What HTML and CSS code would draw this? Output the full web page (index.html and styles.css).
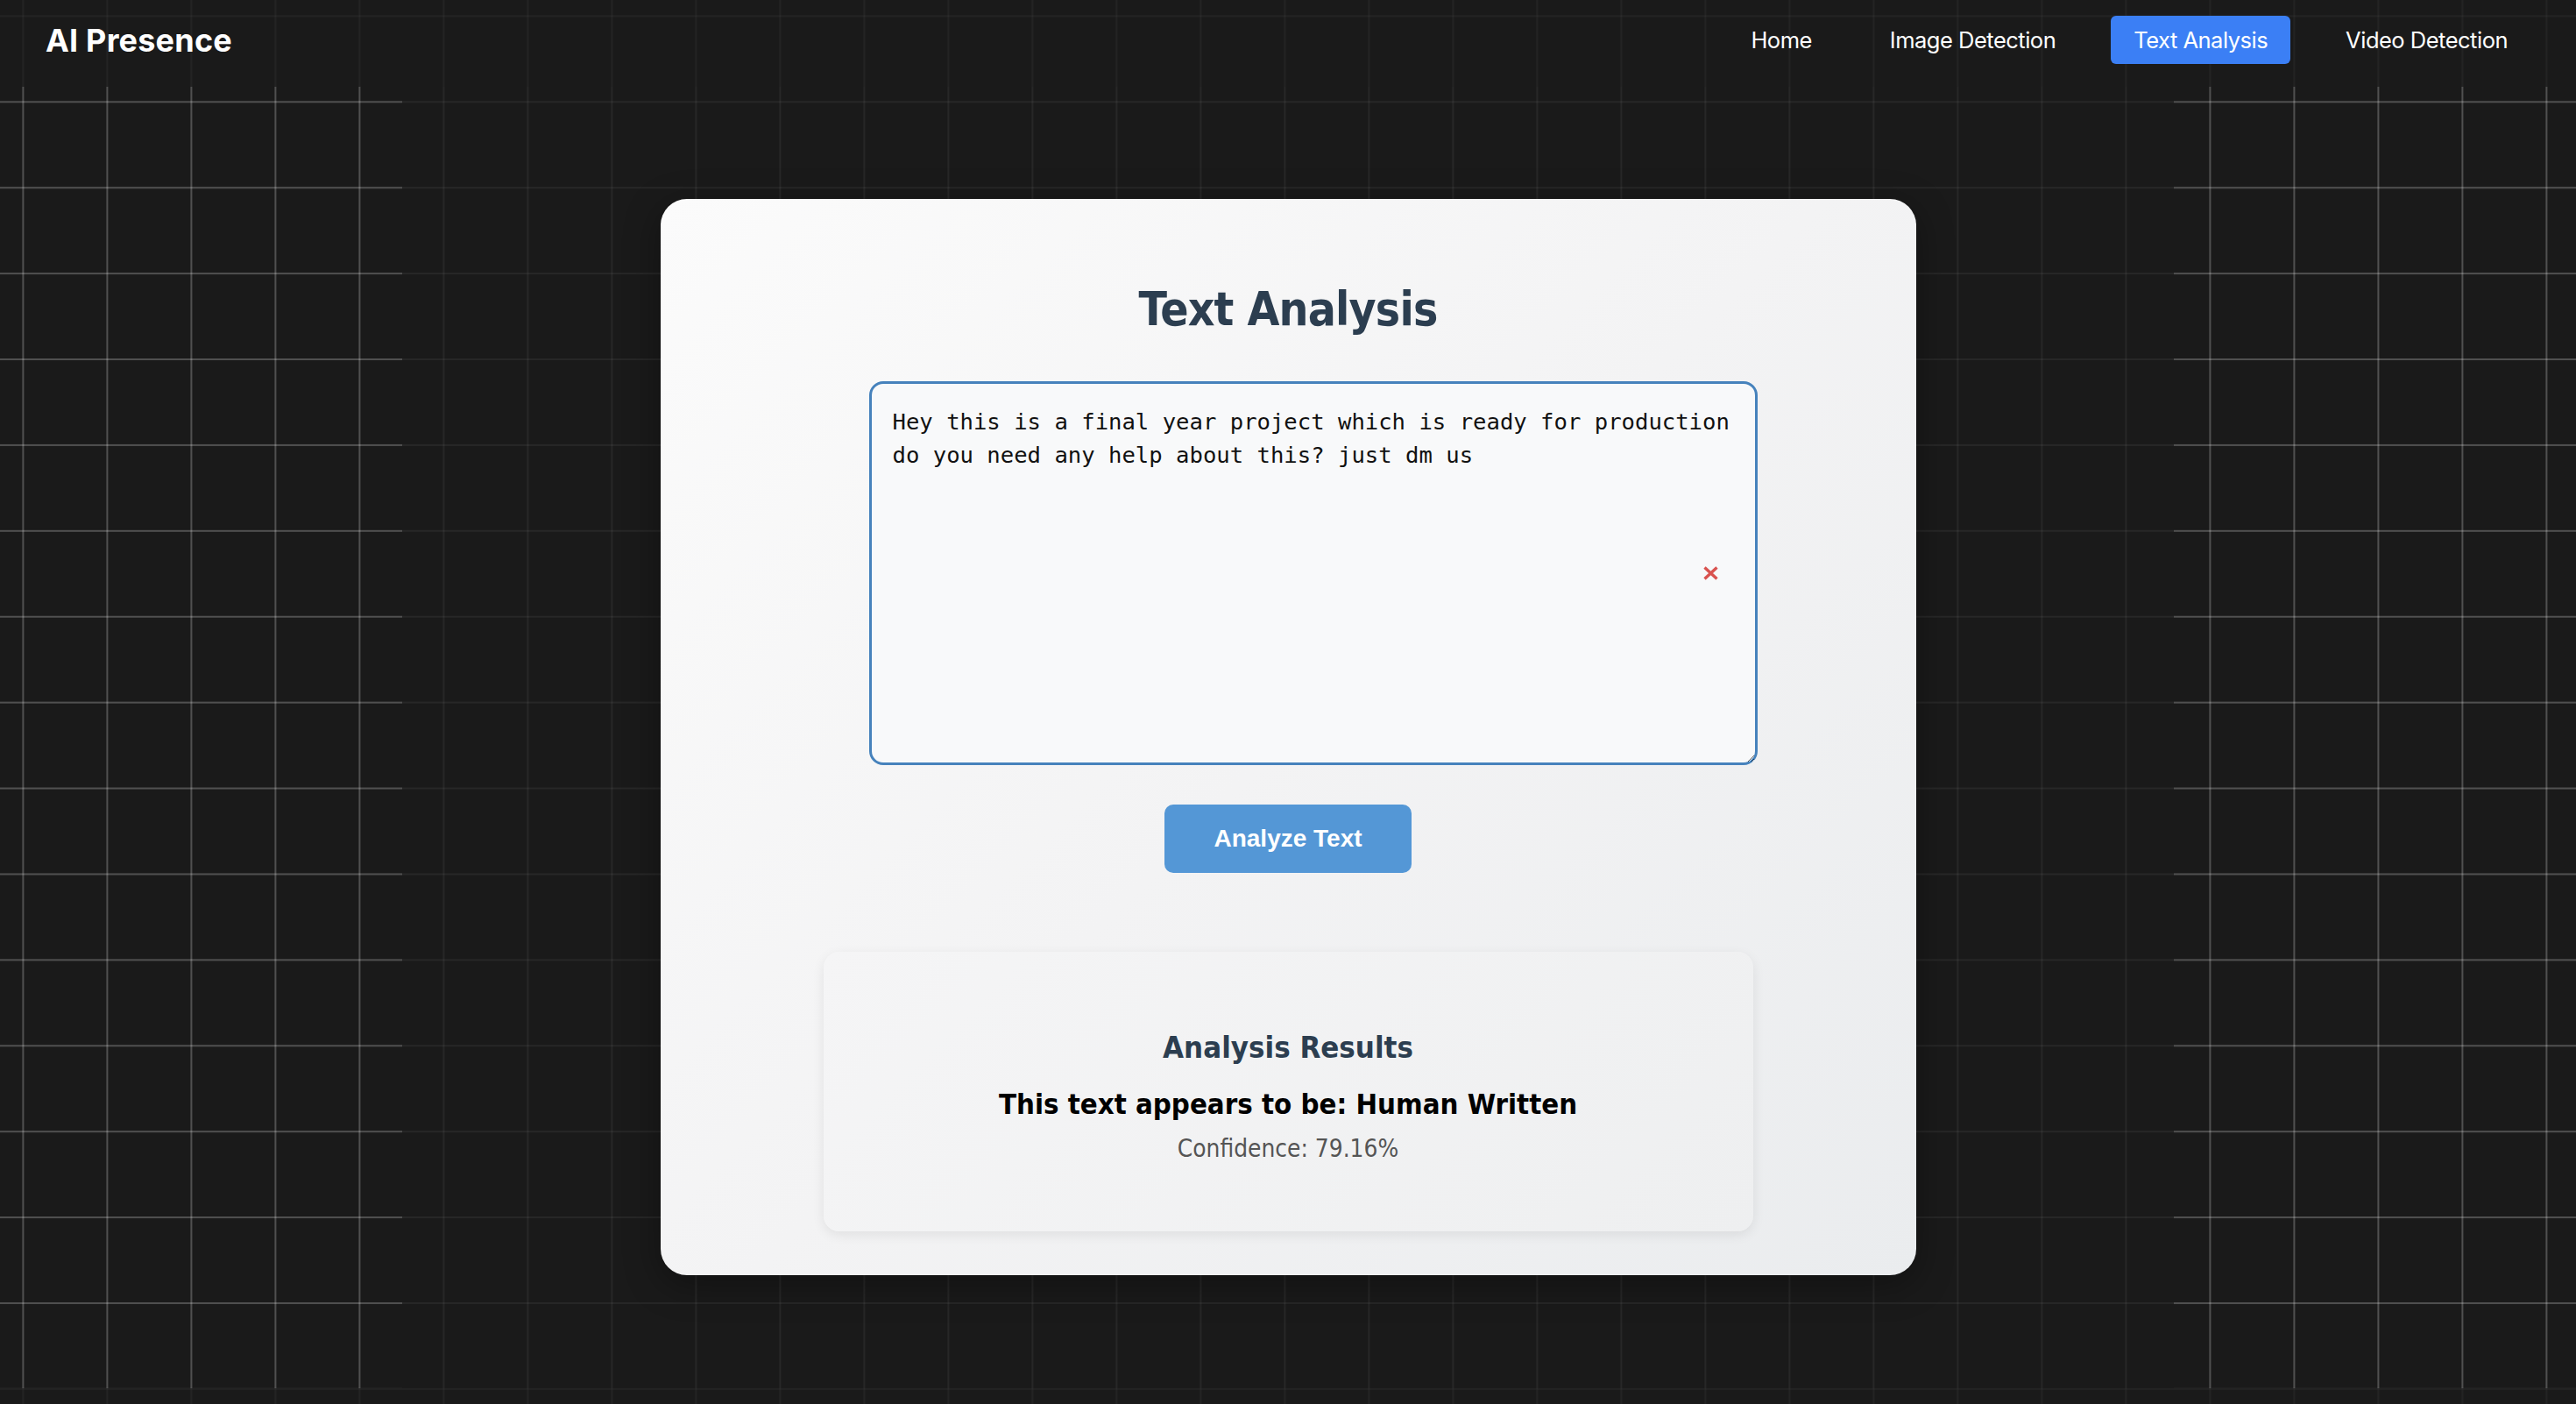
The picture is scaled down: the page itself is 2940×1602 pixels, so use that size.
FILE: index.html
```html
<!DOCTYPE html>
<html lang="en">
<head>
<meta charset="utf-8">
<title>AI Presence - Text Analysis</title>
<link rel="stylesheet" href="styles.css">
</head>
<body>
<header class="topbar">
  <div class="logo">AI Presence</div>
  <nav class="nav">
    <a class="nav-link" href="#">Home</a>
    <a class="nav-link" href="#">Image Detection</a>
    <a class="nav-link active" href="#">Text Analysis</a>
    <a class="nav-link" href="#">Video Detection</a>
  </nav>
</header>
<main class="stage">
  <div class="side"></div>
  <div class="center">
    <section class="card">
      <h1 class="card-title">Text Analysis</h1>
      <div class="input-row">
        <div class="input-wrap">
          <textarea class="text-input" spellcheck="false">Hey this is a final year project which is ready for production
do you need any help about this? just dm us</textarea>
          <button class="clear-btn" aria-label="Clear text"><svg width="17" height="16" viewBox="0 0 17 16"><path d="M1.5 1.5 L15.5 14.5 M15.5 1.5 L1.5 14.5" stroke="#d9534f" stroke-width="3.4" fill="none"/></svg></button>
        </div>
      </div>
      <button class="analyze-btn">Analyze Text</button>
      <div class="results">
        <h3 class="results-title">Analysis Results</h3>
        <p class="results-verdict">This text appears to be: Human Written</p>
        <p class="results-confidence">Confidence: 79.16%</p>
      </div>
    </section>
  </div>
  <div class="side"></div>
</main>
<footer class="bottombar"></footer>
</body>
</html>
```
FILE: styles.css
```css
* { box-sizing: border-box; }

html, body { margin: 0; padding: 0; }

body {
  background-color: #1a1a1a;
  background-image:
    linear-gradient(to right, rgba(255,255,255,0.055) 0 2px, transparent 2px),
    linear-gradient(to bottom, rgba(255,255,255,0.055) 0 2px, transparent 2px);
  background-size: 96px 100%, 100% 97.92px;
  background-position: 25.4px 0, 0 115.3px;
  background-attachment: fixed;
  font-family: Inter, "Noto Sans", sans-serif;
  min-height: 1602px;
}

/* Header */
.topbar {
  height: 99px;
  display: flex;
  justify-content: space-between;
  align-items: flex-start;
  padding: 18px 52px 0 52px;
  background: rgba(30, 30, 30, 0.35);
}

.logo {
  font-family: Inter, "Noto Sans", sans-serif;
  font-weight: 700;
  font-size: 36px;
  line-height: 55px;
  margin-top: 1px;
  color: #ffffff;
  letter-spacing: 0.2px;
}

.nav {
  display: flex;
  gap: 37px;
}

.nav-link {
  font-family: Inter, "Noto Sans", sans-serif;
  font-weight: 400;
  font-size: 25.5px;
  letter-spacing: -0.5px;
  line-height: 55px;
  padding: 0 26px;
  border-radius: 6px;
  color: #ffffff;
  text-decoration: none;
}

.nav-link.active {
  background: #3b7ff5;
}

/* Main stage */
.stage {
  display: grid;
  grid-template-columns: 459px 1fr 459px;
  height: 1485px;
}

.side {
  background-image:
    linear-gradient(to right, rgba(255,255,255,0.19) 0 2px, transparent 2px),
    linear-gradient(to bottom, rgba(255,255,255,0.19) 0 2px, transparent 2px);
  background-size: 96px 100%, 100% 97.92px;
  background-position: 25.4px 0, 0 115.3px;
  background-attachment: fixed;
}

.center {
  display: flex;
  align-items: center;
  justify-content: center;
  padding-bottom: 2px;
}

.card {
  width: 1433px;
  padding: 94px 0 50px;
  border-radius: 30px;
  background: linear-gradient(135deg, #fbfbfb 0%, #f3f3f4 50%, #eaecee 100%);
  box-shadow: 0 10px 40px rgba(0, 0, 0, 0.35);
  display: flex;
  flex-direction: column;
  align-items: center;
}

.card-title {
  margin: 0;
  font-family: "DejaVu Sans Condensed", "DejaVu Sans", sans-serif;
  font-stretch: condensed;
  font-weight: 700;
  font-size: 53px;
  line-height: 64px;
  letter-spacing: -0.8px;
  color: #2c3e50;
}

.input-row {
  margin-top: 50px;
  width: 1071px;
  display: flex;
  justify-content: flex-end;
}

.input-wrap {
  position: relative;
  width: 1014px;
  height: 438px;
}

.text-input {
  display: block;
  width: 100%;
  height: 100%;
  margin: 0;
  border: 3px solid #4682bc;
  border-radius: 16px;
  padding: 24px;
  font-family: "DejaVu Sans Mono", "Liberation Mono", monospace;
  font-size: 25.6px;
  line-height: 38.4px;
  color: #111111;
  background: #f8f9fa;
  outline: none;
  resize: both;
}

.clear-btn {
  position: absolute;
  right: 45px;
  top: 50%;
  transform: translateY(-50%);
  width: 17px;
  height: 16px;
  padding: 0;
  border: 0;
  background: none;
  display: flex;
}

.analyze-btn {
  margin-top: 45px;
  width: 282px;
  height: 78px;
  border: 0;
  border-radius: 10px;
  background: #5497d6;
  color: #ffffff;
  font-family: "Liberation Sans", Arial, sans-serif;
  font-weight: 700;
  font-size: 28px;
}

.results {
  margin-top: 90px;
  width: 1061px;
  height: 319px;
  border-radius: 18px;
  background: linear-gradient(135deg, #f5f5f6 0%, #eeeff0 100%);
  box-shadow: 0 4px 14px rgba(0, 0, 0, 0.08);
  padding-top: 88px;
  text-align: center;
}

.results-title {
  margin: 0;
  font-family: "DejaVu Sans Condensed", "DejaVu Sans", sans-serif;
  font-stretch: condensed;
  font-weight: 700;
  font-size: 34.5px;
  line-height: 42px;
  color: #2c3e50;
}

.results-verdict {
  margin: 24px 0 0;
  font-family: "DejaVu Sans Condensed", "DejaVu Sans", sans-serif;
  font-stretch: condensed;
  font-weight: 700;
  font-size: 32.7px;
  line-height: 40px;
  color: #000000;
}

.results-confidence {
  margin: 14px 0 0;
  font-family: "DejaVu Sans Condensed", "DejaVu Sans", sans-serif;
  font-stretch: condensed;
  font-weight: 400;
  font-size: 27.8px;
  line-height: 34px;
  color: #555555;
}

.bottombar {
  height: 120px;
  background: rgba(30, 30, 30, 0.35);
}
```
